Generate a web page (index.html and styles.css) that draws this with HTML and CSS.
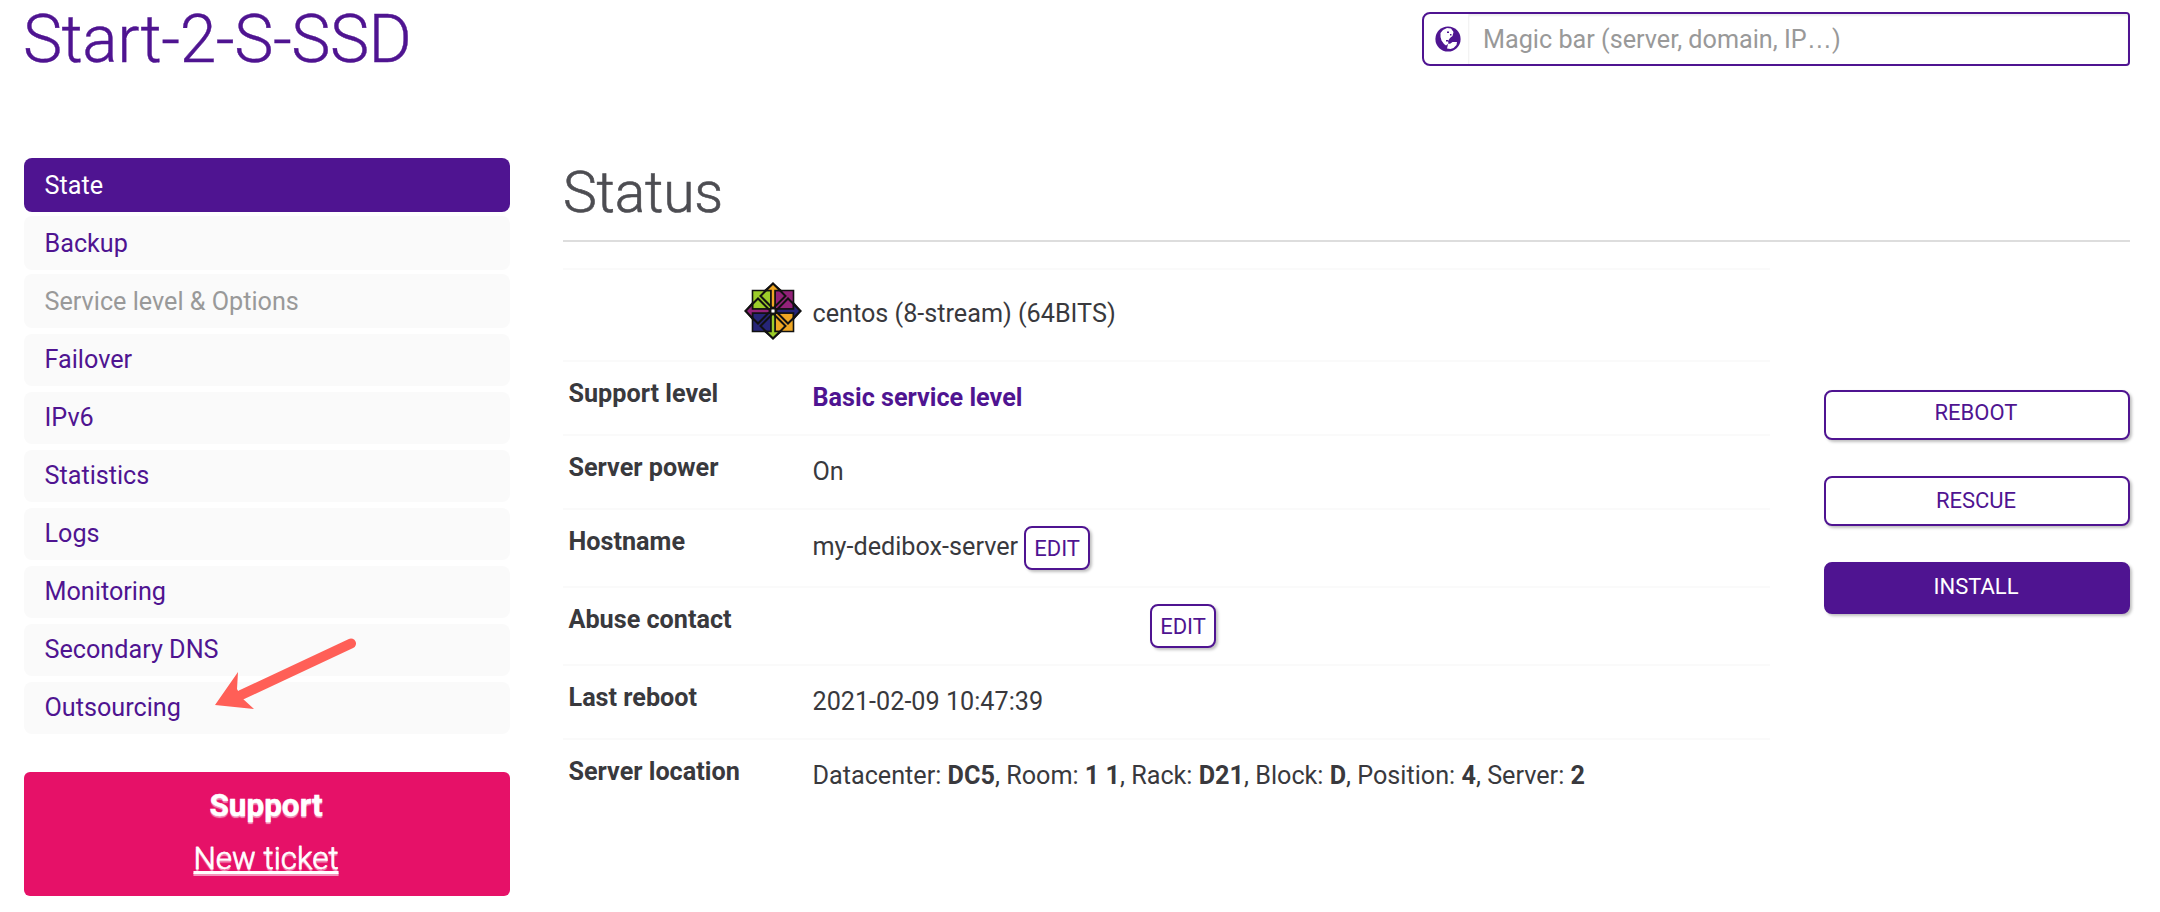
FILE: index.html
```html
<!DOCTYPE html>
<html lang="en">
<head>
<meta charset="utf-8">
<title>Start-2-S-SSD</title>
<link rel="stylesheet" href="styles.css">
</head>
<body>
<header class="top">
  <h1 class="title">Start-2-S-SSD</h1>
  <div class="search">
    <span class="search-icon">
      <svg viewBox="0 0 26 26" width="26" height="26"><circle cx="13" cy="13" r="12.6" fill="#4f1491"/><path d="M8 4 12 2 16 2.500 18.500 6 17.500 10 15 12 13 15 13.500 17.500 11 19.500 9 18 6.500 14.500 5.500 11 5.500 7Z M13 18 15.500 17.500 17.500 16 22 16 21.500 19 18.500 22 15.500 23 12 22.500Z" fill="#fff"/><path d="M12 5.500h2v1.500h-2ZM15 8h1.500v1.500H15ZM11 14h2v1.500h-2Z" fill="#4f1491"/></svg>
    </span>
    <span class="search-input">Magic bar (server, domain, IP<span class="dots">…</span>)</span>
  </div>
</header>
<div class="layout">
  <aside class="side">
    <nav class="menu">
      <a class="item tall active">State</a>
      <a class="item tall">Backup</a>
      <a class="item tall disabled">Service level &amp; Options</a>
      <a class="item">Failover</a>
      <a class="item">IPv6</a>
      <a class="item">Statistics</a>
      <a class="item">Logs</a>
      <a class="item">Monitoring</a>
      <a class="item">Secondary DNS</a>
      <a class="item">Outsourcing</a>
    </nav>
    <section class="support">
      <strong class="support-title">Support</strong>
      <a class="ticket">New ticket</a>
    </section>
    <svg class="arrow" viewBox="0 0 150 80" width="150" height="80"><path d="M136 11.500 26 63" stroke="#ff5f57" stroke-width="10" stroke-linecap="round"/><path d="M0 73 23 40 22 57 27 66 39 77Z" fill="#ff5f57"/></svg>
  </aside>
  <main class="main">
    <h2 class="heading">Status</h2>
    <div class="content">
      <dl class="table">
        <div class="row row-os"><dt class="os-icon">
          <svg viewBox="-29 -29 58 58" width="58" height="58" stroke="#111" stroke-width="1.600">
            <path d="M-20.500-20.500H-2V-2H-20.500Z" fill="#9ccd2a"/><path d="M2-20.500H20.500V-2H2Z" fill="#932279"/><path d="M-20.500 2H-2V20.500H-20.500Z" fill="#262577"/><path d="M2 2H20.500V20.500H2Z" fill="#efa724"/>
            <path d="M0-27.500 8-20.500H2V-2H-2V-20.500H-8Z" fill="#efa724"/><path d="M27.500 0 20.500 8V2H2V-2H20.500V-8Z" fill="#262577"/><path d="M0 27.500-8 20.500H-2V2H2V20.500H8Z" fill="#9ccd2a"/><path d="M-27.500 0-20.500-8V-2H-2V2H-20.500V8Z" fill="#932279"/>
            <path d="M0-27.500 12.500-15 0-2.500-12.500-15Z M27.500 0 15 12.500 2.500 0 15-12.500Z M0 27.500-12.500 15 0 2.500 12.500 15Z M-27.500 0-15-12.500-2.500 0-15 12.500Z" fill="none" stroke-width="2"/>
            <path d="M-1.500-1.500h3v3h-3Z" fill="#fff" stroke="none"/>
          </svg></dt><dd>centos (8-stream) (64BITS)</dd></div>
        <div class="row"><dt>Support level</dt><dd><b class="level">Basic service level</b></dd></div>
        <div class="row"><dt>Server power</dt><dd>On</dd></div>
        <div class="row row-edit"><dt>Hostname</dt><dd><span>my-dedibox-server</span><button class="edit">EDIT</button></dd></div>
        <div class="row row-edit"><dt>Abuse contact</dt><dd><span class="mail"></span><button class="edit">EDIT</button></dd></div>
        <div class="row"><dt>Last reboot</dt><dd>2021-02-09 10:47:39</dd></div>
        <div class="row"><dt>Server location</dt><dd>Datacenter: <b>DC5</b>, Room: <b>1 1</b>, Rack: <b>D21</b>, Block: <b>D</b>, Position: <b>4</b>, Server: <b>2</b></dd></div>
      </dl>
      <div class="actions">
        <button class="action">REBOOT</button>
        <button class="action rescue">RESCUE</button>
        <button class="action primary">INSTALL</button>
      </div>
    </div>
  </main>
</div>
</body>
</html>
```
FILE: styles.css
```css
* { box-sizing: border-box; }
body { margin: 0; background: #fff; color: #39393d; font: 25.2px/36px Roboto, sans-serif; width: 2160px; height: 912px; overflow: hidden; }
h1, h2, dl, dt, dd { margin: 0; font-weight: 400; }
button { font: inherit; color: #4f1491; background: #fff; border: 2px solid #4f1491; box-shadow: 2px 2px 3px rgba(0, 0, 0, .25); padding: 0; }
.top { display: flex; justify-content: space-between; align-items: flex-start; height: 158px; padding: 0 30px 0 23px; }
.title { padding-top: 1px; color: #4f1491; font-size: 66px; line-height: 78px; font-weight: 300; letter-spacing: -.5px; -webkit-text-stroke: .4px; }
.search { display: flex; width: 708px; height: 54px; margin-top: 12px; border: 2px solid #4f1491; border-radius: 8px 4px 4px 8px; overflow: hidden; }
.search-icon { width: 44px; padding: 12px 0 0 11px; line-height: 0; }
.search-input { flex: 1; border-left: 1px solid #f3f3f3; box-shadow: inset 0 2px 2px #eee; padding-left: 14px; line-height: 50px; color: #999; white-space: nowrap; }
.dots { font-family: "Liberation Sans", sans-serif; }
.layout { display: flex; padding: 0 30px 0 24px; gap: 53px; }
.side { position: relative; width: 486px; }
.menu { display: flex; flex-direction: column; gap: 6px; }
.item { height: 52px; padding: 0 20.5px; border-radius: 8px; line-height: 51px; background: #fafafa; color: #4f1491; }
.tall { height: 54px; line-height: 56px; }
.tall + .tall { margin-top: -2px; }
.active { background: #4f1491; color: #fff; }
.disabled { color: #999; }
.support { display: flex; flex-direction: column; align-items: center; height: 124px; margin-top: 38px; padding: 8px 2px 0 0; border-radius: 6px; background: #e61168; color: #fff; text-shadow: 0 2px 1px rgba(255, 255, 255, .55); }
.support-title { font-size: 31.5px; line-height: 52px; -webkit-text-stroke: .5px; }
.ticket { font-size: 31.5px; line-height: 54px; font-weight: 300; text-decoration: underline; -webkit-text-stroke: .4px; }
.arrow { position: absolute; left: 191px; top: 474px; fill: none; }
.main { flex: 1; }
.heading { height: 84px; padding-top: 1px; border-bottom: 2px solid #ddd; color: #4d4d52; font-size: 57px; line-height: 68px; font-weight: 300; letter-spacing: -.2px; -webkit-text-stroke: .6px; }
.content { display: flex; justify-content: space-between; }
.table { width: 1207px; margin-top: 26px; }
.row { display: flex; height: 74px; border-top: 2px solid #fafafa; }
.row dt { width: 249.500px; padding: 14px 0 0 5.500px; font-weight: 700; }
.row dd { padding-top: 18px; }
.row-os { height: 92px; }
.row .os-icon { padding: 12px 10.500px 0 0; text-align: right; line-height: 0; }
.row-os dd { padding-top: 26px; }
.row-edit { height: 78px; }
.row-edit dd { display: flex; align-items: flex-start; gap: 6px; padding-top: 19px; }
.level { color: #4f1491; }
.edit { width: 66px; height: 44px; margin-top: -3px; padding-top: 1px; border-radius: 8px; font-size: 22px; }
.mail { width: 331.500px; }
.actions { display: flex; flex-direction: column; gap: 36px; width: 306px; margin-top: 148px; }
.action { height: 50px; padding: 0 2px 4px 0; border-radius: 8px; font-size: 22px; }
.rescue { padding-bottom: 0; }
.primary { height: 52px; color: #fff; background: #4f1491; padding-bottom: 2px; }
```
